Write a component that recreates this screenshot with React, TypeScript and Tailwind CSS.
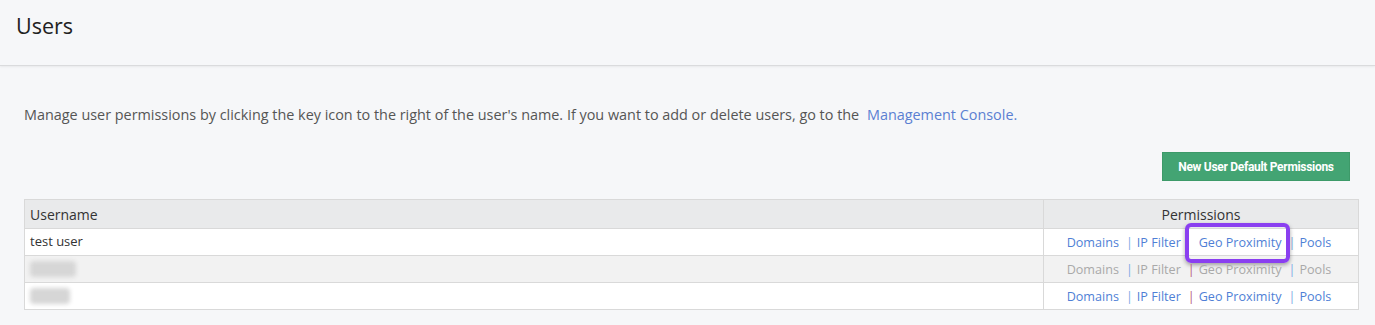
import React from "react";

type Row = { name: string; blurred?: boolean; disabled?: boolean; w?: number };

const rows: Row[] = [
  { name: "test user" },
  { name: "", blurred: true, disabled: true, w: 46 },
  { name: "", blurred: true, w: 40 },
];

function Perms({ disabled, highlight }: { disabled?: boolean; highlight?: boolean }) {
  const link = disabled ? "text-[#a9a9a9]" : "text-[#4f7fd6]";
  return (
    <div className="relative inline-flex items-center text-[12.6px]">
      <span className={link}>Domains</span>
      <span className="ml-[7px] mr-[4px] text-[#7ea9e4]">|</span>
      <span className={link}>IP Filter</span>
      <span className={"ml-[7px] mr-[4px] " + (highlight ? "text-transparent" : "text-[#b5607f]")}>|</span>
      <span className={link}>Geo Proximity</span>
      <span className="ml-[7px] mr-[4px] text-[#7ea9e4]">|</span>
      <span className={link}>Pools</span>
      {highlight && (
        <div className="absolute left-[118px] top-[-11px] h-[40px] w-[105px] rounded-[6px] border-[4px] border-[#8a3ff0] shadow-[0_2px_4px_rgba(0,0,0,0.35)]" />
      )}
    </div>
  );
}

export default function App() {
  return (
    <div className="min-h-[325px] bg-[#f6f7f9] font-['Open_Sans',sans-serif] text-[#333]">
      <div className="h-[66px] border-b border-[#dadbdd] px-4 pt-[10px] shadow-[0_1px_2px_rgba(0,0,0,0.06)]">
        <h1 className="text-[21.5px] leading-[32px] text-[#222]">Users</h1>
      </div>
      <div className="pl-6 pr-4 pt-[39px]">
        <p className="text-[14.4px] leading-[20px] text-[#555]">
          Manage user permissions by clicking the key icon to the right of the user's name. If you want to add or delete users, go to the{" "}
          <span className="ml-1 text-[#5b7fd2]">Management Console.</span>
        </p>
        <div className="mt-[27px] flex justify-end pr-[9px]">
          <button className="h-[29px] w-[188px] whitespace-nowrap border border-[#3d9a69] bg-[#43a473] font-['Roboto',sans-serif] text-[12px] font-bold tracking-[-0.3px] text-white">
            New User Default Permissions
          </button>
        </div>
        <table className="mt-[18px] w-full border-collapse border border-[#d9d9d9] text-[14px]">
          <thead>
            <tr className="h-[29px] bg-[#e9eaeb]">
              <th className="border border-[#d9d9d9] px-[5px] text-left font-normal text-[#333]">Username</th>
              <th className="w-[315px] border border-[#d9d9d9] text-center font-normal text-[#333]">Permissions</th>
            </tr>
          </thead>
          <tbody>
            {rows.map((r, i) => (
              <tr key={i} className={"h-[27px] " + (i === 1 ? "bg-[#f2f2f2]" : "bg-white")}>
                <td className="border border-[#d9d9d9] px-[5px] text-[13px] text-[#333]">
                  {r.blurred ? (
                    <div className="h-[16px] rounded-sm bg-[#d6d6d6] blur-[2px]" style={{ width: r.w }} />
                  ) : (
                    r.name
                  )}
                </td>
                <td className="border border-[#d9d9d9] pr-[4px] text-center">
                  <Perms disabled={r.disabled} highlight={i === 0} />
                </td>
              </tr>
            ))}
          </tbody>
        </table>
      </div>
    </div>
  );
}
